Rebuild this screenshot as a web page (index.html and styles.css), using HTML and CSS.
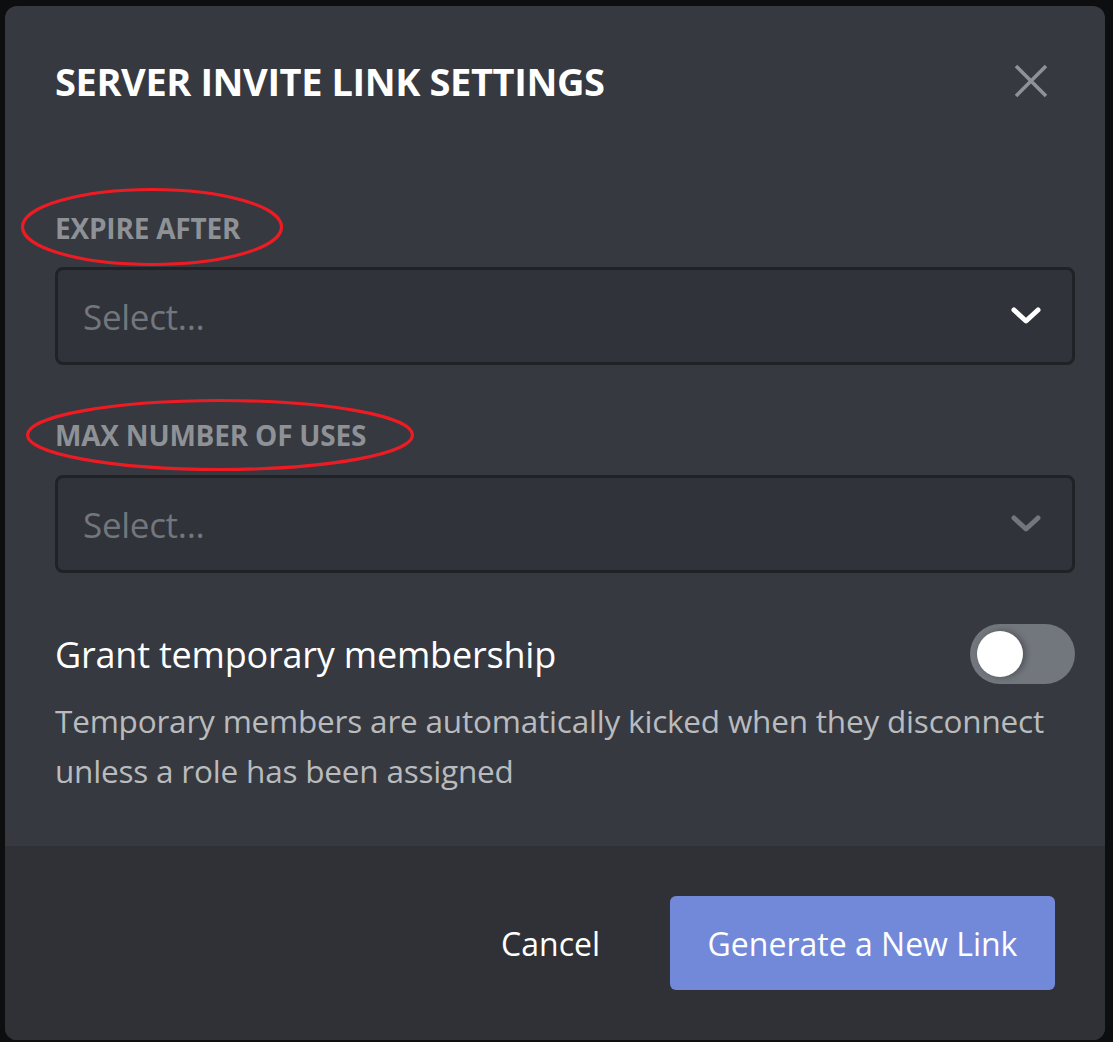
FILE: index.html
```html
<!DOCTYPE html>
<html lang="en">
<head>
<meta charset="utf-8">
<title>Server Invite Link Settings</title>
<link rel="stylesheet" href="styles.css">
</head>
<body>
<div class="backdrop">
  <div class="modal">
    <div class="modal-main">
      <div class="modal-header">
        <h2 class="title">SERVER INVITE LINK SETTINGS</h2>
        <button class="close" aria-label="Close">
          <svg width="36" height="36" viewBox="0 0 36 36"><path d="M3 3 L33 33 M33 3 L3 33" stroke="#8e9297" stroke-width="3.6" fill="none"/></svg>
        </button>
      </div>
      <div class="field">
        <div class="label-wrap">
          <span class="label">EXPIRE AFTER</span>
          <svg class="annot annot-1" width="264" height="80" viewBox="0 0 264 80"><ellipse cx="132" cy="40" rx="129.5" ry="37.5" fill="none" stroke="#ed1c24" stroke-width="3.2"/></svg>
        </div>
        <div class="select">
          <span class="placeholder">Select...</span>
          <svg class="chevron" width="32" height="20" viewBox="0 0 32 20"><path d="M4 4 L16 15 L28 4" stroke="#ffffff" stroke-width="5" stroke-linecap="round" stroke-linejoin="round" fill="none"/></svg>
        </div>
      </div>
      <div class="field">
        <div class="label-wrap">
          <span class="label">MAX NUMBER OF USES</span>
          <svg class="annot annot-2" width="390" height="74" viewBox="0 0 390 74"><ellipse cx="195" cy="37" rx="192.5" ry="34.5" fill="none" stroke="#ed1c24" stroke-width="3.2"/></svg>
        </div>
        <div class="select">
          <span class="placeholder">Select...</span>
          <svg class="chevron" width="32" height="20" viewBox="0 0 32 20"><path d="M4 4 L16 15 L28 4" stroke="#72767d" stroke-width="5" stroke-linecap="round" stroke-linejoin="round" fill="none"/></svg>
        </div>
      </div>
      <div class="toggle-row">
        <span class="toggle-title">Grant temporary membership</span>
        <span class="switch"><span class="knob"></span></span>
      </div>
      <p class="desc">Temporary members are automatically kicked when they disconnect unless a role has been assigned</p>
    </div>
    <div class="modal-footer">
      <button class="btn-cancel">Cancel</button>
      <button class="btn-primary">Generate a New Link</button>
    </div>
  </div>
</div>
</body>
</html>
```

FILE: styles.css
```css
* { box-sizing: border-box; }
html, body { margin: 0; padding: 0; }
body {
  background: #0d0e10;
  font-family: "Open Sans", "Noto Sans", sans-serif;
  width: 1113px;
  height: 1042px;
  overflow: hidden;
}
.backdrop {
  padding: 6px 8px 2px 5px;
  height: 1042px;
}
.modal {
  width: 1100px;
  height: 1034px;
  border-radius: 12px;
  overflow: hidden;
  background: #36393f;
  display: flex;
  flex-direction: column;
}
.modal-main {
  flex: 1;
  padding: 0 30px 0 50px;
}
.modal-header {
  display: flex;
  align-items: center;
  justify-content: space-between;
  height: 150px;
  margin-bottom: 33px;
}
.title {
  margin: 0;
  color: #ffffff;
  font-size: 38px;
  font-weight: 700;
  letter-spacing: -0.4px;
  line-height: 46px;
}
.close {
  background: none;
  border: 0;
  padding: 0;
  margin-right: 26px;
  width: 36px;
  height: 36px;
  display: flex;
}
.label-wrap {
  position: relative;
  height: 78px;
  display: flex;
  align-items: center;
}
.label {
  color: #8e9297;
  font-size: 28px;
  font-weight: 700;
  letter-spacing: -0.2px;
}
.annot { position: absolute; pointer-events: none; }
.annot-1 { left: -35px; top: -2px; }
.field + .field .label-wrap { height: 110px; padding-top: 30px; }
.field + .field .annot-2 { left: -30px; top: 33px; }
.select {
  height: 98px;
  border: 3px solid #202225;
  border-radius: 8px;
  background: #303339;
  display: flex;
  align-items: center;
  justify-content: space-between;
  padding: 0 30px 0 25px;
}
.placeholder {
  color: #72767d;
  font-size: 35px;
  letter-spacing: -0.3px;
}
.toggle-row {
  margin-top: 51px;
  display: flex;
  align-items: center;
  justify-content: space-between;
  height: 60px;
}
.toggle-title {
  color: #ffffff;
  font-size: 36px;
  font-weight: 500;
  letter-spacing: -0.2px;
}
.switch {
  width: 105px;
  height: 60px;
  border-radius: 30px;
  background: #72767d;
  padding: 7px;
  display: flex;
}
.knob {
  width: 46px;
  height: 46px;
  border-radius: 50%;
  background: #ffffff;
  box-shadow: 3px 0 6px rgba(0, 0, 0, 0.3);
}
.desc {
  margin: 12px 0 0;
  max-width: 1010px;
  color: #b9bbbe;
  font-size: 31.5px;
  line-height: 50px;
  letter-spacing: -0.2px;
}
.modal-footer {
  height: 194px;
  background: #2f3136;
  display: flex;
  align-items: center;
  justify-content: flex-end;
  padding: 0 50px 0 0;
}
.btn-cancel {
  background: none;
  border: 0;
  color: #ffffff;
  font-family: inherit;
  font-size: 32px;
  padding: 0 70px 0 30px;
  height: 94px;
}
.btn-primary {
  background: #7289da;
  border: 0;
  border-radius: 6px;
  color: #ffffff;
  font-family: inherit;
  font-size: 32px;
  width: 385px;
  height: 94px;
}
```
